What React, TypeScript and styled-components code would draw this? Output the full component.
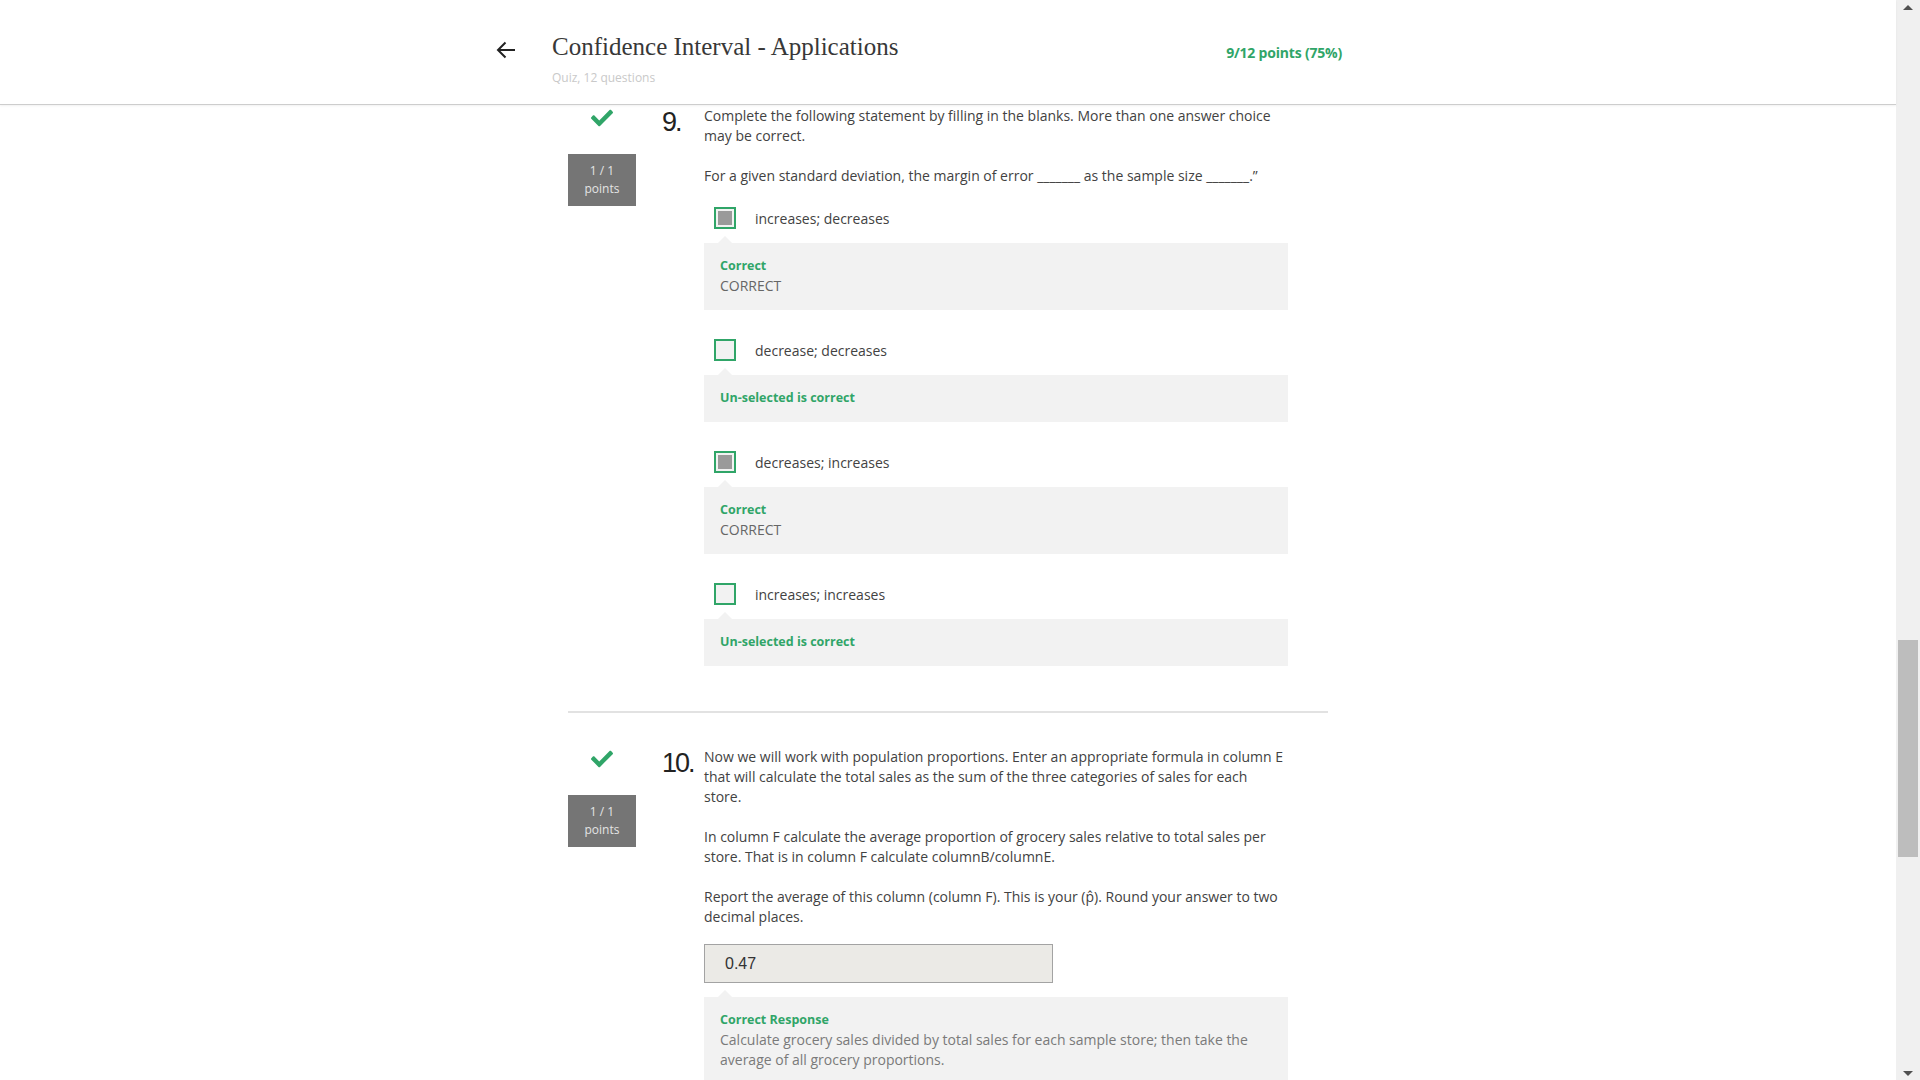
import React from "react";
import styled, { createGlobalStyle } from "styled-components";
import { FaCheck } from "react-icons/fa";

const GREEN = "#30a568";

const GlobalStyle = createGlobalStyle`
  html, body { margin: 0; padding: 0; height: 100%; overflow: hidden; background: #fff; }
  body { font-family: "Open Sans", "Liberation Sans", sans-serif; color: #444; }
  #root { height: 100%; }
  * { box-sizing: border-box; }
`;

const Page = styled.div`
  display: flex;
  height: 100vh;
  width: 100vw;
`;

const Main = styled.div`
  flex: 1;
  min-width: 0;
  display: flex;
  flex-direction: column;
`;

const Header = styled.header`
  height: 105px;
  flex-shrink: 0;
  background: #fff;
  border-bottom: 1px solid #cdcdcd;
  box-shadow: 0 1px 2px rgba(0, 0, 0, 0.06);
  position: relative;
  z-index: 1;
`;

const HeaderInner = styled.div`
  width: 904px;
  margin: 0 auto;
  padding-top: 32px;
  display: flex;
  align-items: flex-start;
`;

const BackButton = styled.button`
  margin-top: 9px;
  width: 20px;
  height: 18px;
  padding: 0;
  border: 0;
  background: none;
  color: #222;
  display: flex;
  cursor: pointer;
`;

const TitleBlock = styled.div`
  flex: 1;
  margin-left: 36px;
  display: flex;
  flex-direction: column;
  gap: 8px;
`;

const Title = styled.h1`
  margin: 0;
  font-family: "Liberation Serif", "Times New Roman", serif;
  font-weight: normal;
  font-size: 25px;
  line-height: 30px;
  color: #383838;
`;

const Subtitle = styled.div`
  font-size: 12px;
  line-height: 16px;
  color: #c9c9c9;
`;

const Score = styled.div`
  margin-top: 11px;
  margin-right: 58px;
  font-size: 14px;
  line-height: 20px;
  font-weight: 700;
  letter-spacing: -0.2px;
  color: ${GREEN};
`;

const Scroller = styled.div`
  flex: 1;
  overflow: hidden;
`;

const Column = styled.div`
  width: 760px;
  margin: 0 auto;
  padding-top: 1px;
`;

const Question = styled.section`
  display: flex;
  align-items: flex-start;
`;

const Side = styled.div`
  width: 68px;
  flex-shrink: 0;
  display: flex;
  flex-direction: column;
  align-items: center;
`;

const CheckMark = styled.div`
  margin-top: 1px;
  height: 22px;
  display: flex;
  color: ${GREEN};
`;

const Badge = styled.div`
  margin-top: 25px;
  width: 68px;
  height: 52px;
  padding-top: 8px;
  background: #757575;
  color: #e4e4e4;
  font-size: 12px;
  line-height: 18px;
  text-align: center;
`;

const Number = styled.div`
  margin-left: 26px;
  margin-top: 3px;
  width: 42px;
  flex-shrink: 0;
  font-family: "Liberation Sans", Arial, sans-serif;
  font-size: 27px;
  line-height: 26px;
  letter-spacing: -2px;
  color: #222;
`;

const Body = styled.div`
  width: 584px;
`;

const Para = styled.p`
  margin: 0;
  font-size: 14px;
  line-height: 20px;
  color: #424242;
  & + & {
    margin-top: 20px;
  }
`;

const OptionList = styled.div`
  margin-top: 21px;
  display: flex;
  flex-direction: column;
  gap: 29px;
`;

const Choice = styled.div`
  display: flex;
  flex-direction: column;
`;

const ChoiceRow = styled.div`
  height: 22px;
  padding-left: 10px;
  display: flex;
  align-items: center;
  gap: 19px;
  font-size: 14px;
  color: #424242;
`;

const Box = styled.span<{ $checked: boolean }>`
  width: 22px;
  height: 22px;
  flex-shrink: 0;
  border: 2px solid ${GREEN};
  background: ${(p) => (p.$checked ? "#9a9a9a" : "#f2f2f2")};
  box-shadow: inset 0 0 0 2px #f2f2f2;
`;

const Feedback = styled.div`
  position: relative;
  margin-top: 14px;
  padding: 13px 16px 14px;
  background: #f2f2f2;
  font-size: 14px;
  line-height: 20px;
  &::before {
    content: "";
    position: absolute;
    left: 14px;
    top: -7px;
    border-left: 7px solid transparent;
    border-right: 7px solid transparent;
    border-bottom: 7px solid #f2f2f2;
  }
`;

const FeedbackTitle = styled.div`
  font-size: 12.5px;
  font-weight: 700;
  color: ${GREEN};
`;

const FeedbackText = styled.div<{ $muted?: boolean }>`
  color: ${(p) => (p.$muted ? "#7a7a7a" : "#666")};
`;

const Divider = styled.hr`
  margin: 45px 0 34px;
  height: 2px;
  border: 0;
  background: #e2e2e2;
`;

const AnswerInput = styled.div`
  margin-top: 17px;
  width: 349px;
  height: 39px;
  padding-left: 20px;
  display: flex;
  align-items: center;
  border: 1px solid #a3a3a3;
  background: #ebeae6;
  font-family: "Liberation Sans", Arial, sans-serif;
  font-size: 16px;
  color: #333;
`;

const ScrollTrack = styled.div`
  width: 24px;
  flex-shrink: 0;
  background: #f0f0f0;
  display: flex;
  flex-direction: column;
`;

const ScrollArrow = styled.div<{ $down?: boolean }>`
  height: 20px;
  display: flex;
  align-items: center;
  justify-content: center;
  &::after {
    content: "";
    border-left: 5px solid transparent;
    border-right: 5px solid transparent;
    ${(p) =>
      p.$down
        ? "border-top: 5px solid #505050; margin-top: 6px;"
        : "border-bottom: 5px solid #505050; margin-top: -6px;"}
  }
`;

const ScrollArea = styled.div`
  flex: 1;
  padding: 620px 2px 0;
`;

const Thumb = styled.div`
  height: 217px;
  background: #bdbdbd;
`;

type Opt = { label: string; checked: boolean };

const options: Opt[] = [
  { label: "increases; decreases", checked: true },
  { label: "decrease; decreases", checked: false },
  { label: "decreases; increases", checked: true },
  { label: "increases; increases", checked: false },
];

const SideInfo = () => (
  <Side>
    <CheckMark>
      <FaCheck size={22} />
    </CheckMark>
    <Badge>
      1 / 1
      <br />
      points
    </Badge>
  </Side>
);

export default function App() {
  return (
    <>
      <GlobalStyle />
      <Page>
        <Main>
          <Header>
            <HeaderInner>
              <BackButton aria-label="Back">
                <svg width="20" height="18" viewBox="0 0 20 18" fill="none">
                  <path d="M19 9H2M9.5 1.5L2 9l7.5 7.5" stroke="currentColor" strokeWidth="2" />
                </svg>
              </BackButton>
              <TitleBlock>
                <Title>Confidence Interval - Applications</Title>
                <Subtitle>Quiz, 12 questions</Subtitle>
              </TitleBlock>
              <Score>9/12 points (75%)</Score>
            </HeaderInner>
          </Header>
          <Scroller>
            <Column>
              <Question>
                <SideInfo />
                <Number>9.</Number>
                <Body>
                  <Para>
                    Complete the following statement by filling in the blanks. More than one answer choice may be
                    correct.
                  </Para>
                  <Para>For a given standard deviation, the margin of error _______ as the sample size _______.”</Para>
                  <OptionList>
                    {options.map((o) => (
                      <Choice key={o.label}>
                        <ChoiceRow>
                          <Box $checked={o.checked} />
                          {o.label}
                        </ChoiceRow>
                        <Feedback>
                          {o.checked ? (
                            <>
                              <FeedbackTitle>Correct</FeedbackTitle>
                              <FeedbackText>CORRECT</FeedbackText>
                            </>
                          ) : (
                            <FeedbackTitle>Un-selected is correct</FeedbackTitle>
                          )}
                        </Feedback>
                      </Choice>
                    ))}
                  </OptionList>
                </Body>
              </Question>
              <Divider />
              <Question>
                <SideInfo />
                <Number>10.</Number>
                <Body>
                  <Para>
                    Now we will work with population proportions. Enter an appropriate formula in column E that will
                    calculate the total sales as the sum of the three categories of sales for each store.
                  </Para>
                  <Para>
                    In column F calculate the average proportion of grocery sales relative to total sales per store.
                    That is in column F calculate columnB/columnE.
                  </Para>
                  <Para>
                    Report the average of this column (column F). This is your (p̂). Round your answer to two decimal
                    places.
                  </Para>
                  <AnswerInput>0.47</AnswerInput>
                  <Feedback>
                    <FeedbackTitle>Correct Response</FeedbackTitle>
                    <FeedbackText $muted>
                      Calculate grocery sales divided by total sales for each sample store; then take the average of
                      all grocery proportions.
                    </FeedbackText>
                  </Feedback>
                </Body>
              </Question>
            </Column>
          </Scroller>
        </Main>
        <ScrollTrack>
          <ScrollArrow />
          <ScrollArea>
            <Thumb />
          </ScrollArea>
          <ScrollArrow $down />
        </ScrollTrack>
      </Page>
    </>
  );
}
